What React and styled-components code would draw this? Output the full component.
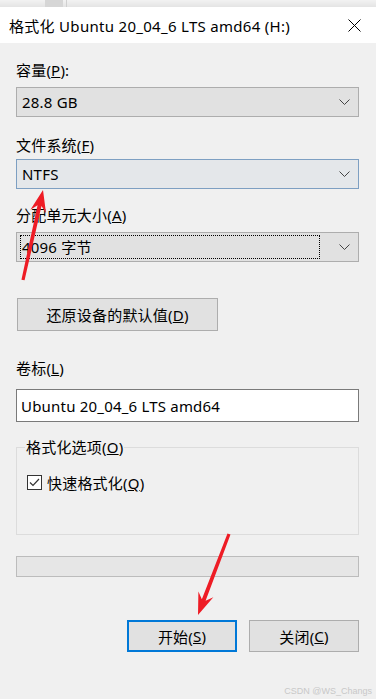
import React from 'react';
import styled, { createGlobalStyle } from 'styled-components';

const GlobalStyle = createGlobalStyle`
  html, body {
    margin: 0;
    padding: 0;
    background: #f0f0f0;
  }
  body {
    font-family: "Noto Sans", "Noto Sans CJK SC", sans-serif;
    font-size: 15px;
    letter-spacing: 0.2px;
    color: #000;
  }
`;

const Page = styled.div`
  position: relative;
  width: 376px;
  height: 699px;
  overflow: hidden;
  background: #f0f0f0;
`;

const TopStrip = styled.div`
  height: 7px;
  background: linear-gradient(#f2f2f2, #e4e4e4);
  display: flex;
  .tab {
    margin-left: 45px;
    width: 18px;
    background: #d6d6d6;
  }
  .sep {
    margin-left: 3px;
    width: 1px;
    background: #d0d0d0;
  }
`;

const TitleBar = styled.div`
  height: 36px;
  background: #fff;
  display: flex;
  align-items: center;
  justify-content: space-between;
  padding: 0 15px 0 9px;
  font-size: 15px;
  letter-spacing: 0.3px;
  color: #000;
`;

const Body = styled.div`
  padding: 0 17px 0 16px;
`;

const Label = styled.div`
  margin-top: ${p => p.$top}px;
  height: 20px;
  line-height: 20px;
  color: #000;
`;

const Select = styled.div`
  margin-top: ${p => p.$top}px;
  height: 30px;
  box-sizing: border-box;
  border: 1px solid ${p => (p.$hover ? '#7d9fc2' : '#adadad')};
  background: ${p => (p.$hover ? '#e4e7ea' : '#e1e1e1')};
  display: flex;
  align-items: center;
  justify-content: space-between;
  padding: 0 8px 0 4px;
`;

const SelectText = styled.span`
  height: 22px;
  line-height: 22px;
  flex: 1;
  margin-right: 20px;
  padding-left: 1px;
  box-sizing: border-box;
  outline: ${p => (p.$focus ? '1px dotted #000' : 'none')};
`;

const Button = styled.div`
  margin-top: ${p => p.$top || 0}px;
  margin-left: ${p => p.$left || 0}px;
  width: ${p => p.$w}px;
  height: ${p => p.$h || 32}px;
  box-sizing: border-box;
  border: ${p => (p.$primary ? '2px solid #0078d7' : '1px solid #adadad')};
  background: #e1e1e1;
  display: flex;
  align-items: center;
  justify-content: center;
  color: #000;
`;

const TextBox = styled.div`
  margin-top: ${p => p.$top}px;
  height: 33px;
  box-sizing: border-box;
  border: 1px solid #7a7a7a;
  background: #fff;
  display: flex;
  align-items: center;
  padding-left: 4px;
`;

const Group = styled.fieldset`
  margin: ${p => p.$top}px 0 0 0;
  padding: 0 0 0 10px;
  height: 98px;
  box-sizing: border-box;
  border: 1px solid #dcdcdc;
  legend {
    padding: 0 1px;
    margin-left: -2px;
    line-height: 20px;
  }
`;

const CheckRow = styled.label`
  display: flex;
  align-items: center;
  gap: 5px;
  margin-top: 15px;
`;

const CheckBox = styled.span`
  width: 15px;
  height: 15px;
  box-sizing: border-box;
  border: 1px solid #333;
  background: #fff;
  display: flex;
  align-items: center;
  justify-content: center;
`;

const Progress = styled.div`
  margin-top: 21px;
  height: 21px;
  box-sizing: border-box;
  border: 1px solid #bcbcbc;
  background: #e6e6e6;
`;

const Actions = styled.div`
  margin-top: 43px;
  display: flex;
  justify-content: flex-end;
`;

const Watermark = styled.div`
  position: absolute;
  right: 4px;
  bottom: 3px;
  font-family: "Liberation Sans", sans-serif;
  font-size: 9px;
  letter-spacing: 0;
  color: #c8c8c8;
`;

const Overlay = styled.svg`
  position: absolute;
  left: 0;
  top: 0;
  pointer-events: none;
`;

const Chevron = () => (
  <svg width="11" height="7" viewBox="0 0 11 7">
    <path d="M0.5 0.5 L5.5 5.5 L10.5 0.5" fill="none" stroke="#444" strokeWidth="1" />
  </svg>
);

const Arrow = ({ x1, y1, x2, y2 }) => {
  const dx = x2 - x1;
  const dy = y2 - y1;
  const len = Math.hypot(dx, dy);
  const ux = dx / len;
  const uy = dy / len;
  const nx = -uy;
  const ny = ux;
  const head = 22;
  const hw = 8;
  const notch = 16;
  const bx = x2 - ux * head;
  const by = y2 - uy * head;
  const nxp = x2 - ux * notch;
  const nyp = y2 - uy * notch;
  const pts = [
    [x2, y2],
    [bx + nx * hw, by + ny * hw],
    [nxp + nx * 2, nyp + ny * 2],
    [x1 + nx * 1.6, y1 + ny * 1.6],
    [x1 - nx * 1.6, y1 - ny * 1.6],
    [nxp - nx * 2, nyp - ny * 2],
    [bx - nx * hw, by - ny * hw],
  ];
  return <polygon points={pts.map(p => p.join(',')).join(' ')} fill="#ee1c25" />;
};

export default function App() {
  return (
    <Page>
      <GlobalStyle />
      <TopStrip>
        <span className="tab" />
        <span className="sep" />
      </TopStrip>
      <TitleBar>
        <span>格式化 Ubuntu 20_04_6 LTS amd64 (H:)</span>
        <svg width="13" height="13" viewBox="0 0 13 13">
          <path d="M0.5 0.5 L12.5 12.5 M12.5 0.5 L0.5 12.5" stroke="#000" strokeWidth="1" />
        </svg>
      </TitleBar>
      <Body>
        <Label $top={17}>容量(<u>P</u>):</Label>
        <Select $top={7}>
          <SelectText>28.8 GB</SelectText>
          <Chevron />
        </Select>
        <Label $top={18}>文件系统(<u>F</u>)</Label>
        <Select $top={4} $hover>
          <SelectText>NTFS</SelectText>
          <Chevron />
        </Select>
        <Label $top={16}>分配单元大小(<u>A</u>)</Label>
        <Select $top={7}>
          <SelectText $focus>4096 字节</SelectText>
          <Chevron />
        </Select>
        <Button $top={36} $left={1} $w={201} $h={33}>
          还原设备的默认值(<u>D</u>)
        </Button>
        <Label $top={27}>卷标(<u>L</u>)</Label>
        <TextBox $top={11}>Ubuntu 20_04_6 LTS amd64</TextBox>
        <Group $top={15}>
          <legend>格式化选项(<u>O</u>)</legend>
          <CheckRow>
            <CheckBox>
              <svg width="11" height="9" viewBox="0 0 11 9">
                <path d="M1 4.5 L4 7.5 L10 1" fill="none" stroke="#333" strokeWidth="1.2" />
              </svg>
            </CheckBox>
            <span>快速格式化(<u>Q</u>)</span>
          </CheckRow>
        </Group>
        <Progress />
        <Actions>
          <Button $primary $w={110}>开始(<u>S</u>)</Button>
          <Button $left={12} $w={110}>关闭(<u>C</u>)</Button>
        </Actions>
      </Body>
      <Overlay width="376" height="699">
        <Arrow x1={23} y1={280} x2={43} y2={190} />
        <Arrow x1={229} y1={534} x2={198} y2={615} />
      </Overlay>
      <Watermark>CSDN @WS_Changs</Watermark>
    </Page>
  );
}
